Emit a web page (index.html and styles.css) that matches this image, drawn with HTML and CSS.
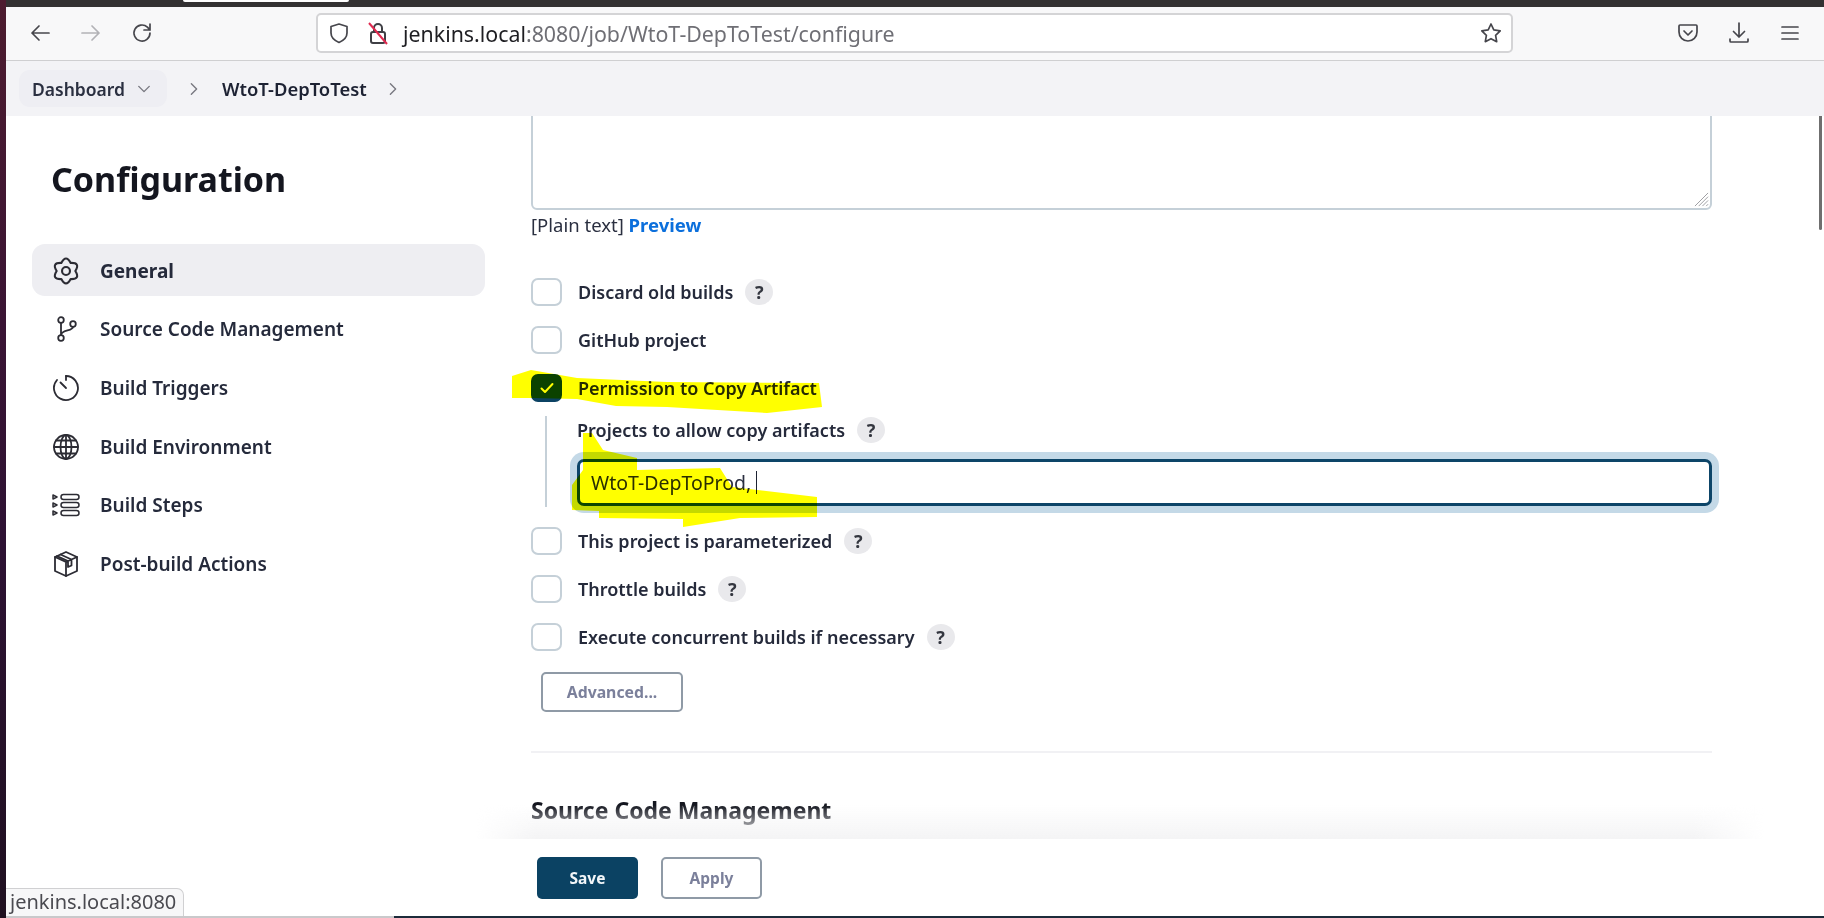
FILE: index.html
```html
<!DOCTYPE html>
<html lang="en">
<head>
<meta charset="utf-8">
<title>Jenkins configure</title>
<link rel="stylesheet" href="styles.css">
</head>
<body>
<div class="desktop-edge"></div>
<div class="window">
  <div class="tabstrip"><div class="tab-sliver"></div></div>
  <header class="toolbar">
    <div class="nav-buttons">
      <svg class="ff-icon" viewBox="0 0 24 24"><path d="M21 12H4M11 5l-7 7 7 7"/></svg>
      <svg class="ff-icon faded" viewBox="0 0 24 24"><path d="M3 12h17M13 5l7 7-7 7"/></svg>
      <svg class="ff-icon" viewBox="0 0 24 24"><path d="M20 12a8 8 0 1 1-2.600-5.900L20 9M20 3v6h-6"/></svg>
    </div>
    <div class="urlbar">
      <svg class="ff-icon shield" viewBox="0 0 24 24"><path d="M12 3l8 2.500V12c0 4.500-3.500 7.500-8 9.500-4.500-2-8-5-8-9.500V5.500z"/></svg>
      <svg class="lock" viewBox="0 0 24 24"><rect x="5" y="11" width="14" height="11" rx="2"/><path d="M8 11V7a4 4 0 0 1 8 0v4"/><path class="lock-slash" d="M3 2l18 21"/></svg>
      <span class="url"><span class="host">jenkins.local</span>:8080/job/WtoT-DepToTest/configure</span>
      <svg class="ff-icon star" viewBox="0 0 24 24"><path d="M12 3l2.800 5.900 6.400.9-4.600 4.500 1.100 6.400L12 17.700l-5.700 3 1.100-6.400-4.600-4.500 6.400-.9z"/></svg>
    </div>
    <div class="tool-buttons">
      <svg class="ff-icon" viewBox="0 0 24 24"><path d="M4 4h16a1 1 0 0 1 1 1v6c0 5-4 9-9 9s-9-4-9-9V5a1 1 0 0 1 1-1z"/><path d="M8 10l4 4 4-4"/></svg>
      <svg class="ff-icon" viewBox="0 0 24 24"><path d="M12 2v14M6.500 10.500L12 16l5.500-5.500M3 18v2a1 1 0 0 0 1 1h16a1 1 0 0 0 1-1v-2"/></svg>
      <svg class="ff-icon" viewBox="0 0 24 24"><path d="M4 6h16M4 12h16M4 18h16"/></svg>
    </div>
  </header>
  <nav class="breadcrumbs">
    <div class="crumb-pill">Dashboard
      <svg class="chev chev-down" viewBox="0 0 16 16"><path d="M2 5l6 6 6-6"/></svg>
    </div>
    <svg class="chev chev-sep" viewBox="0 0 16 16"><path d="M5 2l6 6-6 6"/></svg>
    <span class="crumb">WtoT-DepToTest</span>
    <svg class="chev chev-sep2" viewBox="0 0 16 16"><path d="M5 2l6 6-6 6"/></svg>
  </nav>
  <div class="page">
    <div class="layout">
      <aside class="sidebar">
        <h1 class="side-title">Configuration</h1>
        <ul class="side-list">
          <li class="side-item active">
            <svg class="nav-icon" viewBox="0 0 24 24"><path d="M8 5.070Q12-2.500 16 5.070 24.560 4.750 20 12 24.560 19.250 16 18.930 12 26.500 8 18.930-.56 19.250 4 12-.56 4.750 8 5.070z"/><circle cx="12" cy="12" r="3.400"/></svg>
            General
          </li>
          <li class="side-item">
            <svg class="nav-icon" viewBox="0 0 28 28"><circle cx="9" cy="5" r="2.800"/><circle cx="9" cy="23" r="2.800"/><circle cx="21" cy="9" r="2.800"/><path d="M9 8v12M21 12c0 4-12 3-12 8"/></svg>
            Source Code Management
          </li>
          <li class="side-item">
            <svg class="nav-icon" viewBox="0 0 28 28"><path d="M14 2a12 12 0 1 1-9 4"/><path d="M14 2v4M8.500 8.500L14 14"/></svg>
            Build Triggers
          </li>
          <li class="side-item">
            <svg class="nav-icon" viewBox="0 0 28 28"><circle cx="14" cy="14" r="12"/><ellipse cx="14" cy="14" rx="5.500" ry="12"/><path d="M14 2v24M2 14h24M4 7.500h20M4 20.500h20"/></svg>
            Build Environment
          </li>
          <li class="side-item">
            <svg class="nav-icon steps" viewBox="0 0 28 28"><path d="M1 4l4 2-4 2zM1 12l4 2-4 2zM1 20l4 2-4 2z"/><rect x="9" y="3.500" width="18" height="5" rx="2.500"/><rect x="9" y="11.500" width="18" height="5" rx="2.500"/><rect x="9" y="19.500" width="18" height="5" rx="2.500"/></svg>
            Build Steps
          </li>
          <li class="side-item">
            <svg class="nav-icon" viewBox="0 0 28 28"><path d="M14 2l11 5v14l-11 5-11-5V7z"/><path d="M3 7l11 5 11-5M14 12v14M8.500 4.500l11 5v6l-3.500 1.500v-6l-11-5"/></svg>
            Post-build Actions
          </li>
        </ul>
      </aside>
      <main class="content">
        <div class="desc-wrap">
          <textarea class="description" aria-label="Description"></textarea>
          <svg class="grip" viewBox="0 0 16 16"><path d="M1 15L15 1M5 15L15 5M9 15l6-6M13 15l2-2"/></svg>
        </div>
        <div class="format-line">[Plain text] <a class="preview" href="#">Preview</a></div>
        <div class="check-row first">
          <span class="box"></span><span class="check-label">Discard old builds</span><span class="help">?</span>
        </div>
        <div class="check-row">
          <span class="box"></span><span class="check-label">GitHub project</span>
        </div>
        <div class="check-row tight">
          <span class="box checked"><svg class="tick" viewBox="0 0 16 16"><path d="M2.500 8.500l3.500 3.500 7.500-8"/></svg></span><span class="check-label">Permission to Copy Artifact</span>
        </div>
        <div class="nested">
          <div class="nested-label"><span class="check-label">Projects to allow copy artifacts</span><span class="help">?</span></div>
          <div class="text-input">WtoT-DepToProd,&nbsp;<span class="caret"></span></div>
        </div>
        <div class="check-row">
          <span class="box"></span><span class="check-label">This project is parameterized</span><span class="help">?</span>
        </div>
        <div class="check-row">
          <span class="box"></span><span class="check-label">Throttle builds</span><span class="help">?</span>
        </div>
        <div class="check-row">
          <span class="box"></span><span class="check-label">Execute concurrent builds if necessary</span><span class="help">?</span>
        </div>
        <button class="btn btn-advanced" type="button">Advanced...</button>
        <hr class="divider">
        <h2 class="section-title">Source Code Management</h2>
      </main>
    </div>
    <footer class="actions">
      <button class="btn btn-save" type="button">Save</button>
      <button class="btn btn-apply" type="button">Apply</button>
    </footer>
    <div class="scroll-thumb"></div>
    <div class="status-tip">jenkins.local:8080</div>
  </div>
  <div class="bottom-edge"><div class="edge-light"></div><div class="edge-dark"></div></div>
</div>
<svg class="marker" viewBox="0 0 1824 918" aria-hidden="true">
  <path d="M512 376L531 370 577 378 667 382 819 383 822 407 767 413 667 407 616 406 577 399 530 398 512 398z"/>
  <path d="M583 433L592 433 603 450 637 458 637 470 720 468 732 487 817 497 817 517 740 518 683 527 683 519 599 518 599 511 572 510 572 485 583 470z"/>
</svg>
</body>
</html>
```
FILE: styles.css
```css
* { box-sizing: border-box; }
html, body { margin: 0; height: 100%; }
body {
  width: 1824px;
  height: 918px;
  overflow: hidden;
  display: flex;
  position: relative;
  font-family: "Noto Sans", "Open Sans", sans-serif;
  color: #1d2233;
  background: #fff;
}
.desktop-edge {
  width: 6px;
  flex: none;
  background: linear-gradient(180deg, #4d1c2f 0%, #3a1434 35%, #2d1233 60%, #1f1020 100%);
}
.window { flex: 1; min-width: 0; display: flex; flex-direction: column; }

/* browser chrome */
.tabstrip { height: 7px; background: #333132; flex: none; padding-left: 177px; }
.tab-sliver { width: 166px; height: 2px; background: #fff; border-radius: 0 0 4px 4px; }
.toolbar {
  height: 54px;
  flex: none;
  display: flex;
  align-items: center;
  background: #f8f8f9;
  border-bottom: 1px solid #cfcfd1;
  padding-bottom: 2px;
}
.ff-icon { width: 24px; height: 24px; fill: none; stroke: #46464c; stroke-width: 1.700; stroke-linecap: round; stroke-linejoin: round; flex: none; }
.ff-icon.faded { stroke: #b2b2b6; }
.nav-buttons { display: flex; gap: 27px; padding-left: 22px; width: 310px; flex: none; }
.urlbar {
  width: 1197px;
  height: 40px;
  flex: none;
  display: flex;
  align-items: center;
  background: #fff;
  border: 2px solid #d4d4d6;
  border-radius: 5px;
  padding-left: 9px;
}
.lock { width: 24px; height: 24px; margin-left: 15px; fill: none; stroke: #3f3f45; stroke-width: 2; flex: none; }
.lock-slash { stroke: #e0294f; }
.url { margin: 2px 0 0 13px; font-size: 21.350px; line-height: 28px; color: #6f6f75; white-space: nowrap; flex: 1; }
.host { color: #1e1e22; }
.star { margin-right: 8px; }
.tool-buttons { display: flex; gap: 27px; margin-left: 163px; }

.breadcrumbs {
  height: 55px;
  flex: none;
  display: flex;
  align-items: center;
  background: #f3f3f6;
  padding-left: 13px;
  font-size: 17.500px;
  font-weight: 600;
}
.crumb-pill {
  width: 148px;
  height: 37px;
  display: flex;
  align-items: center;
  padding-left: 13px;
  background: #eeeef3;
  border-radius: 11px;
  color: #2a2f40;
}
.chev { width: 14px; height: 14px; fill: none; stroke: #77777f; stroke-width: 1.600; stroke-linecap: round; stroke-linejoin: round; flex: none; }
.chev-down { margin-left: 12px; }
.chev-sep { margin-left: 20px; }
.crumb { margin-left: 21px; font-size: 18.400px; color: #1d2233; }
.chev-sep2 { margin-left: 19px; }

/* page */
.page { flex: 1; min-height: 0; position: relative; display: flex; flex-direction: column; overflow: hidden; background: #fff; }
.layout { flex: 1; min-height: 0; display: flex; overflow: hidden; }
.sidebar { width: 525px; flex: none; padding: 0 46px 0 26px; }
.side-title { margin: 41px 0 43px 19px; font-size: 34px; line-height: 44px; font-weight: 700; color: #14161f; }
.side-list { list-style: none; margin: 0; padding: 0; display: flex; flex-direction: column; gap: 6.700px; }
.side-item {
  height: 52px;
  display: flex;
  align-items: center;
  gap: 20px;
  padding: 1px 0 0 20px;
  border-radius: 13px;
  font-size: 19px;
  font-weight: 600;
  color: #252a3b;
}
.side-item.active { background: #eeeef2; font-weight: 700; }
.nav-icon { width: 28px; height: 28px; fill: none; stroke: #2c2c34; stroke-width: 1.800; stroke-linejoin: round; stroke-linecap: round; flex: none; }
.nav-icon.steps { stroke-width: 1.500; }

.content { flex: 1; padding-right: 112px; display: flex; flex-direction: column; align-items: flex-start; min-width: 0; }
.desc-wrap { width: 100%; height: 150px; margin-top: -56px; flex: none; position: relative; }
.description {
  display: block;
  width: 100%;
  height: 100%;
  background: #fff;
  border: 2.500px solid #c5d0d8;
  border-radius: 6px;
  resize: none;
  outline: none;
}
.grip { position: absolute; right: 3px; bottom: 3px; width: 15px; height: 15px; fill: none; stroke: #9a9a9e; stroke-width: 1; }
.format-line { height: 26px; margin-top: 2px; line-height: 26px; font-size: 18.500px; color: #2a2f40; }
.preview { color: #0b6fdc; font-weight: 700; text-decoration: none; }
.check-row { width: 100%; height: 28px; display: flex; align-items: center; margin-bottom: 20px; flex: none; }
.check-row.first { margin-top: 40px; }
.check-row.tight { margin-bottom: 14px; }
.box { width: 31px; height: 28px; flex: none; border: 2.500px solid #c5d0d8; border-radius: 7px; background: #fff; display: flex; align-items: center; justify-content: center; }
.box.checked { background: #0b4263; border-color: #0b4263; }
.tick { width: 16px; height: 16px; fill: none; stroke: #fff; stroke-width: 2; stroke-linecap: round; stroke-linejoin: round; }
.check-label { margin-left: 16px; font-size: 18px; font-weight: 600; color: #252a3b; white-space: nowrap; }
.help {
  width: 28px;
  height: 26px;
  margin-left: 12px;
  border-radius: 50%;
  background: #e9e9ec;
  display: flex;
  align-items: center;
  justify-content: center;
  font-size: 18px;
  font-weight: 700;
  color: #33363f;
  flex: none;
}
.nested { width: 100%; height: 91px; margin: 0 0 20px 14px; padding-left: 30px; border-left: 2px solid #c5d0d8; flex: none; display: flex; flex-direction: column; max-width: 1167px; }
.nested-label { height: 28px; display: flex; align-items: center; }
.nested-label .check-label { margin-left: 0; }
.text-input {
  height: 47px;
  width: 1135px;
  margin-top: 15px;
  display: flex;
  align-items: center;
  padding-left: 11px;
  background: #fff;
  border: 3px solid #0d4568;
  border-radius: 7px;
  box-shadow: 0 0 0 7px #c4d9e7;
  font-size: 19.500px;
  color: #2a2f40;
}
.caret { width: 1px; height: 23px; background: #1d2233; }
.btn { font-family: inherit; font-weight: 700; border-radius: 5px; background: #fff; cursor: pointer; }
.btn-advanced { width: 142px; height: 40px; margin: 1px 0 0 10px; flex: none; border: 2.500px solid #8f9aa6; font-size: 15.800px; color: #7b809b; }
.divider { width: 100%; height: 2px; margin: 39px 0 0; border: 0; background: #f1f1f4; flex: none; }
.section-title { margin: 42px 0 0; font-size: 23px; line-height: 30px; font-weight: 700; color: #14161f; flex: none; }

.actions { height: 77px; flex: none; display: flex; align-items: center; gap: 23px; padding: 1px 0 0 531px; position: relative; background: #fff; }
.actions::before {
  content: "";
  position: absolute;
  left: 470px;
  right: 60px;
  top: -34px;
  height: 34px;
  background: linear-gradient(180deg, rgba(244,244,245,0), #f4f4f5);
  -webkit-mask-image: linear-gradient(90deg, transparent, #000 60px, #000 calc(100% - 70px), transparent);
  mask-image: linear-gradient(90deg, transparent, #000 60px, #000 calc(100% - 70px), transparent);
}
.btn-save { width: 101px; height: 42px; border: 0; background: #0b4263; color: #f3f6f9; font-size: 15.500px; }
.btn-apply { width: 101px; height: 42px; border: 2.500px solid #8f9aa6; color: #7b809b; font-size: 15.500px; }

.scroll-thumb { position: absolute; right: 2px; top: -6px; width: 3px; height: 120px; border-radius: 2px; background: #6f6f6f; }
.status-tip {
  position: absolute;
  left: 0;
  bottom: 0;
  width: 178px;
  height: 28px;
  padding-left: 4px;
  line-height: 25px;
  font-size: 20px;
  color: #4a4a50;
  background: #f7f7f8;
  border: 1px solid #d0d0d2;
  border-left: 0;
  border-bottom: 0;
  border-radius: 0 7px 0 0;
  white-space: nowrap;
}
.bottom-edge { height: 2px; flex: none; display: flex; }
.edge-light { width: 388px; background: #c9c9cb; }
.edge-dark { flex: 1; background: #1c2b3a; }

.marker {
  position: absolute;
  left: 0;
  top: 0;
  width: 1824px;
  height: 918px;
  fill: #ffff00;
  mix-blend-mode: multiply;
  pointer-events: none;
}
```
